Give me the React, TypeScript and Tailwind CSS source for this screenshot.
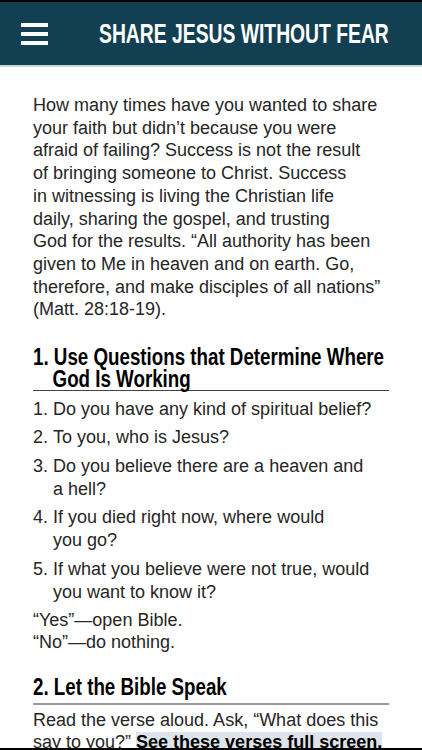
import React from "react";

const body = { fontFamily: '"Liberation Sans", Arial, sans-serif' };

const questions = [
  ["Do you have any kind of spiritual belief?"],
  ["To you, who is Jesus?"],
  ["Do you believe there are a heaven and", "a hell?"],
  ["If you died right now, where would", "you go?"],
  ["If what you believe were not true, would", "you want to know it?"],
];

const intro = [
  "How many times have you wanted to share",
  "your faith but didn\u2019t because you were",
  "afraid of failing? Success is not the result",
  "of bringing someone to Christ. Success",
  "in witnessing is living the Christian life",
  "daily, sharing the gospel, and trusting",
  "God for the results. \u201cAll authority has been",
  "given to Me in heaven and on earth. Go,",
  "therefore, and make disciples of all nations\u201d",
  "(Matt. 28:18-19).",
];

// condensed headline look: Liberation Sans Bold squeezed horizontally
function Narrow({ children, className = "" }: { children: React.ReactNode; className?: string }) {
  return <span className={"origin-left whitespace-nowrap " + className}>{children}</span>;
}

export default function App() {
  return (
    <main className="flex h-[750px] flex-col overflow-hidden bg-white text-[#262626]" style={body}>
      <header className="h-[67px] shrink-0 border-t-2 border-b-2 border-t-black border-b-[#c9d9e0] bg-[#133f52]">
        <div className="flex h-full items-center">
          <button className="ml-[21px] flex w-[27px] shrink-0 flex-col gap-[5px]">
            <span className="block h-1 w-full bg-white" />
            <span className="block h-1 w-full bg-white" />
            <span className="block h-1 w-full bg-white" />
          </button>
          <h1 className="ml-[51px] w-[290px] shrink-0 text-[28px] font-bold leading-none text-white">
            <Narrow className="inline-block scale-x-[0.69]">SHARE JESUS WITHOUT FEAR</Narrow>
          </h1>
        </div>
      </header>

      <section className="min-h-0 flex-1 overflow-hidden px-[33px] pt-[27px]">
        <p className="text-[18px] leading-[22.7px] whitespace-nowrap">
          {intro.map((l, i) => (
            <span key={i} className="block">{l}</span>
          ))}
        </p>

        <h2 className="mt-[25px] border-b border-[#444] text-[23px] font-bold leading-[22px] text-black">
          <Narrow className="block scale-x-[0.815]">1. Use Questions that Determine Where</Narrow>
          <Narrow className="block scale-x-[0.815] pl-[24px]">God Is Working</Narrow>
        </h2>

        <ol className="mt-[7px] space-y-[5.4px] text-[18px] leading-[23px]">
          {questions.map((q, i) => (
            <li key={i} className="flex whitespace-nowrap">
              <span className="w-[20px] shrink-0">{i + 1}.</span>
              <span>
                {q.map((l, j) => (
                  <span key={j} className="block">{l}</span>
                ))}
              </span>
            </li>
          ))}
        </ol>

        <p className="mt-[5px] text-[18px] leading-[22.5px]">
          <span className="block">{"\u201cYes\u201d\u2014open Bible."}</span>
          <span className="block">{"\u201cNo\u201d\u2014do nothing."}</span>
        </p>

        <h2 className="mt-[21px] border-b-2 border-[#999] pb-[4px] text-[23px] font-bold leading-[24px] text-black">
          <Narrow className="inline-block scale-x-[0.815]">2. Let the Bible Speak</Narrow>
        </h2>

        <p className="mt-[4px] text-[18px] leading-[22.5px] whitespace-nowrap">
          <span className="block">{"Read the verse aloud. Ask, \u201cWhat does this"}</span>
          <span className="block">
            {"say to you?\u201d "}
            <span className="bg-[#dde3e8] font-bold text-black">See these verses full screen.</span>
          </span>
        </p>
      </section>
      <div className="h-[2px] shrink-0 bg-black" />
    </main>
  );
}
